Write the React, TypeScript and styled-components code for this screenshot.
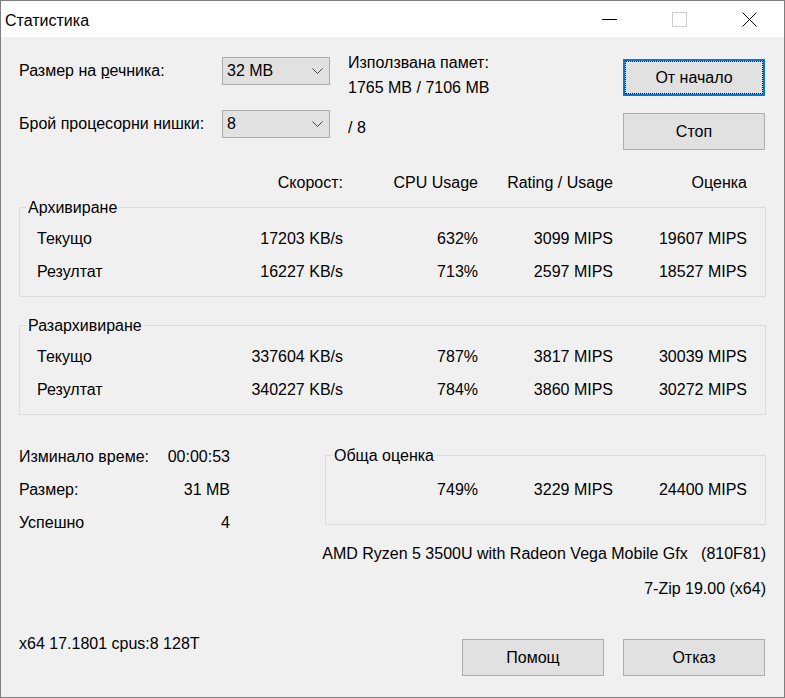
import styled, { createGlobalStyle } from "styled-components";

const GlobalStyle = createGlobalStyle`
  html, body {
    margin: 0;
    padding: 0;
    background: #f0f0f0;
  }
  body {
    font-family: "Liberation Sans", Arial, sans-serif;
    font-size: 16px;
    color: #000;
  }
`;

const COLS = "100px 206px 135px 135px 134px";

const Window = styled.div`
  width: 785px;
  height: 698px;
  box-sizing: border-box;
  border: 1px solid #7f7f7f;
  background: #f0f0f0;
  display: flex;
  flex-direction: column;
`;

const TitleBar = styled.div`
  height: 36px;
  background: #fff;
  display: flex;
  align-items: center;
  padding-left: 4px;
  flex-shrink: 0;
`;

const Title = styled.span`
  font-size: 16px;
  flex: 1;
  padding-top: 3px;
`;

const CaptionButton = styled.div`
  width: 70px;
  height: 36px;
  display: flex;
  align-items: center;
  justify-content: center;
`;

const Client = styled.div`
  flex: 1;
  display: flex;
  flex-direction: column;
  padding: 0 18px;
`;

const Top = styled.div`
  display: flex;
  align-items: flex-start;
  margin-top: 13px;
`;

const Settings = styled.div`
  display: grid;
  grid-template-columns: 203px 108px;
  grid-auto-rows: 28px;
  row-gap: 25px;
  align-items: center;
  margin-top: 7px;
`;

const Combo = styled.div`
  height: 28px;
  box-sizing: border-box;
  border: 1px solid #adadad;
  background: #e1e1e1;
  display: flex;
  align-items: center;
  justify-content: space-between;
  padding: 0 6px 0 4px;
`;

const Memory = styled.div`
  display: flex;
  flex-direction: column;
  margin-left: 18px;
  line-height: 25px;
`;

const Threads = styled.span`
  margin-top: 15px;
`;

const ButtonColumn = styled.div`
  margin-left: auto;
  margin-right: 1px;
  margin-top: 9px;
  display: flex;
  flex-direction: column;
  gap: 17px;
`;

const Button = styled.div<{ $focused?: boolean }>`
  width: 142px;
  height: 37px;
  box-sizing: border-box;
  background: #e1e1e1;
  border: ${(p) => (p.$focused ? "2px solid #0078d7" : "1px solid #adadad")};
  outline: ${(p) => (p.$focused ? "1px dotted #000" : "none")};
  outline-offset: -3px;
  display: flex;
  align-items: center;
  justify-content: center;
`;

const HeaderRow = styled.div`
  display: grid;
  grid-template-columns: ${COLS};
  padding: 0 18px;
  margin-top: 22px;
  line-height: 22px;
  text-align: right;
`;

const Group = styled.fieldset<{ $top: number; $pt: number; $pb: number }>`
  margin: ${(p) => p.$top}px 0 0 0;
  padding: ${(p) => p.$pt}px 0 ${(p) => p.$pb}px 0;
  border: 1px solid #dcdcdc;
  min-width: 0;
  legend {
    margin-left: 6px;
    padding: 1px 2px 0 2px;
    line-height: 20px;
  }
`;

const DataGrid = styled.div<{ $cols: string; $pl: number }>`
  display: grid;
  grid-template-columns: ${(p) => p.$cols};
  grid-auto-rows: 33px;
  align-items: center;
  padding: 0 18px 0 ${(p) => p.$pl}px;
`;

const Cell = styled.span<{ $left?: boolean }>`
  text-align: ${(p) => (p.$left ? "left" : "right")};
  white-space: nowrap;
`;

const Bottom = styled.div`
  display: flex;
  align-items: flex-start;
  margin-top: 24px;
`;

const Stats = styled.div`
  width: 211px;
  display: grid;
  grid-template-columns: 1fr auto;
  grid-auto-rows: 33px;
  align-items: center;
  padding-top: 1px;
`;

const RightColumn = styled.div`
  margin-left: auto;
  width: 441px;
  display: flex;
  flex-direction: column;
  align-items: flex-end;
  line-height: 20px;
`;

const TotalGroup = styled(Group)`
  align-self: stretch;
`;

const CpuLine = styled.span`
  margin-top: 19px;
  white-space: pre;
`;

const VersionLine = styled.span`
  margin-top: 15px;
`;

const Footer = styled.div`
  display: flex;
  align-items: flex-start;
  margin-top: 35px;
  line-height: 20px;
`;

const FooterButtons = styled.div`
  margin-left: auto;
  margin-right: 1px;
  margin-top: 5px;
  display: flex;
  gap: 19px;
`;

const Chevron = () => (
  <svg width="11" height="6" viewBox="0 0 11 6">
    <polyline points="0.5,0.5 5.5,5.5 10.5,0.5" fill="none" stroke="#444" strokeWidth="1" />
  </svg>
);

const rowsCompress = [
  ["Текущо", "17203 KB/s", "632%", "3099 MIPS", "19607 MIPS"],
  ["Резултат", "16227 KB/s", "713%", "2597 MIPS", "18527 MIPS"],
];

const rowsDecompress = [
  ["Текущо", "337604 KB/s", "787%", "3817 MIPS", "30039 MIPS"],
  ["Резултат", "340227 KB/s", "784%", "3860 MIPS", "30272 MIPS"],
];

const renderRows = (rows: string[][]) =>
  rows.map((r) =>
    r.map((c, i) => (
      <Cell key={r[0] + i} $left={i === 0}>
        {c}
      </Cell>
    ))
  );

const App = () => {
  return (
    <Window>
      <GlobalStyle />
      <TitleBar>
        <Title>Статистика</Title>
        <CaptionButton>
          <svg width="15" height="15" viewBox="0 0 15 15">
            <line x1="0" y1="7.5" x2="15" y2="7.5" stroke="#000" strokeWidth="1" />
          </svg>
        </CaptionButton>
        <CaptionButton>
          <svg width="15" height="15" viewBox="0 0 15 15">
            <rect x="0.5" y="0.5" width="14" height="14" fill="none" stroke="#cccccc" strokeWidth="1" />
          </svg>
        </CaptionButton>
        <CaptionButton>
          <svg width="15" height="15" viewBox="0 0 15 15">
            <path d="M0.5 0.5 L14.5 14.5 M14.5 0.5 L0.5 14.5" stroke="#000" strokeWidth="1" />
          </svg>
        </CaptionButton>
      </TitleBar>
      <Client>
        <Top>
          <Settings>
            <span>
              Размер на <u>р</u>ечника:
            </span>
            <Combo>
              <span>32 MB</span>
              <Chevron />
            </Combo>
            <span>Брой процесорни нишки:</span>
            <Combo>
              <span>8</span>
              <Chevron />
            </Combo>
          </Settings>
          <Memory>
            <span>Използвана памет:</span>
            <span>1765 MB / 7106 MB</span>
            <Threads>/ 8</Threads>
          </Memory>
          <ButtonColumn>
            <Button $focused>От начало</Button>
            <Button>Стоп</Button>
          </ButtonColumn>
        </Top>

        <HeaderRow>
          <span />
          <span>Скорост:</span>
          <span>CPU Usage</span>
          <span>Rating / Usage</span>
          <span>Оценка</span>
        </HeaderRow>

        <Group $top={3} $pt={4} $pb={8}>
          <legend>Архивиране</legend>
          <DataGrid $cols={COLS} $pl={17}>
            {renderRows(rowsCompress)}
          </DataGrid>
        </Group>

        <Group $top={18} $pt={4} $pb={8}>
          <legend>Разархивиране</legend>
          <DataGrid $cols={COLS} $pl={17}>
            {renderRows(rowsDecompress)}
          </DataGrid>
        </Group>

        <Bottom>
          <Stats>
            <Cell $left>Изминало време:</Cell>
            <Cell>00:00:53</Cell>
            <Cell $left>Размер:</Cell>
            <Cell>31 MB</Cell>
            <Cell $left>Успешно</Cell>
            <Cell>4</Cell>
          </Stats>
          <RightColumn>
            <TotalGroup $top={6} $pt={7} $pb={18}>
              <legend>Обща оценка</legend>
              <DataGrid $cols="152px 135px 134px" $pl={0}>
                <Cell>749%</Cell>
                <Cell>3229 MIPS</Cell>
                <Cell>24400 MIPS</Cell>
              </DataGrid>
            </TotalGroup>
            <CpuLine>AMD Ryzen 5 3500U with Radeon Vega Mobile Gfx   (810F81)</CpuLine>
            <VersionLine>7-Zip 19.00 (x64)</VersionLine>
          </RightColumn>
        </Bottom>

        <Footer>
          <span>x64 17.1801 cpus:8 128T</span>
          <FooterButtons>
            <Button>Помощ</Button>
            <Button>Отказ</Button>
          </FooterButtons>
        </Footer>
      </Client>
    </Window>
  );
};

export default App;
